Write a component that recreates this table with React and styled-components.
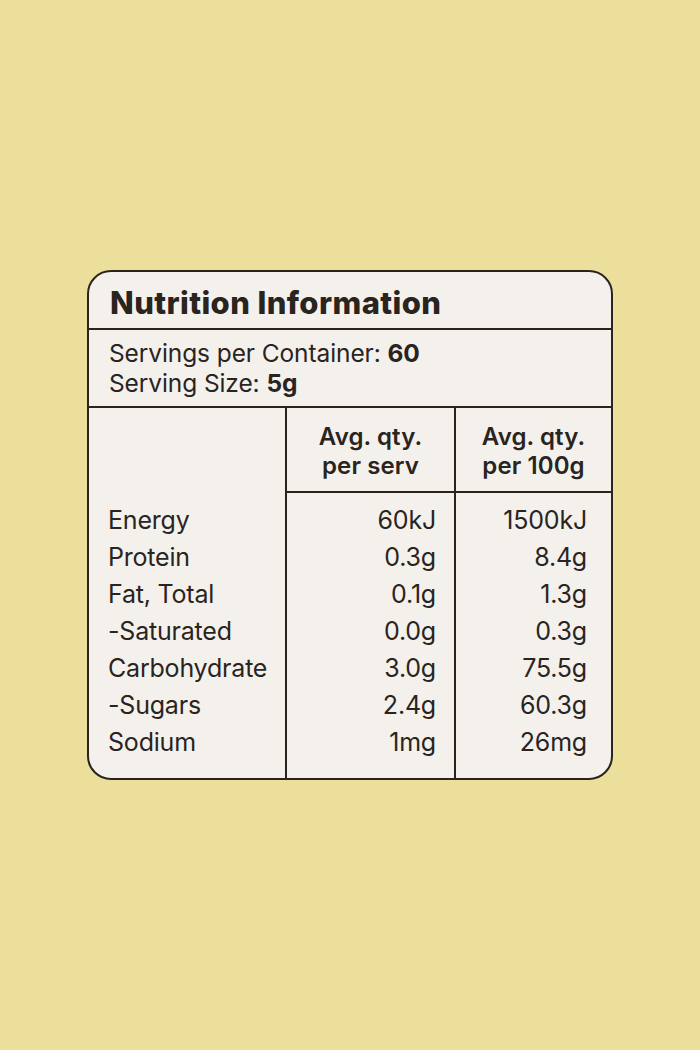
import React from 'react';
import styled, {createGlobalStyle} from 'styled-components';

const colors = {
  page: '#ecde9b',
  card: '#f4f1ed',
  ink: '#2a241f',
};

const GlobalStyle = createGlobalStyle`
  html, body {
    margin: 0;
    padding: 0;
    background: ${colors.page};
  }
  body {
    font-family: Inter, "Noto Sans", sans-serif;
    color: ${colors.ink};
  }
`;

const StyledPage = styled.div`
  width: 700px;
  height: 1050px;
  padding-top: 270px;
  box-sizing: border-box;
  display: flex;
  justify-content: center;
`;

const StyledCard = styled.div`
  width: 526px;
  height: 510px;
  box-sizing: border-box;
  border: 2.5px solid ${colors.ink};
  border-radius: 24px;
  background: ${colors.card};
  overflow: hidden;
  display: flex;
  flex-direction: column;
`;

const StyledTitle = styled.h1`
  margin: 0;
  height: 58px;
  padding: 13px 0 0 21px;
  box-sizing: border-box;
  border-bottom: 2.5px solid ${colors.ink};
  font-size: 31px;
  font-weight: 800;
  letter-spacing: 0.4px;
  line-height: 36px;
`;

const StyledServings = styled.div`
  height: 78px;
  padding: 8px 0 0 20px;
  box-sizing: border-box;
  border-bottom: 2.5px solid ${colors.ink};
  font-size: 24.5px;
  letter-spacing: -0.1px;
  line-height: 30px;

  b {
    font-weight: 700;
  }
`;

const StyledGrid = styled.div`
  flex: 1;
  display: grid;
  grid-template-columns: 196px 169px 1fr;
  grid-template-rows: 85px 1fr;
`;

const StyledCell = styled.div`
  box-sizing: border-box;
  border-left: ${p => (p.$first ? 'none' : `2.5px solid ${colors.ink}`)};
  border-bottom: ${p => (p.$head && !p.$first ? `2.5px solid ${colors.ink}` : 'none')};
`;

const StyledHead = styled(StyledCell)`
  display: flex;
  flex-direction: column;
  justify-content: center;
  align-items: center;
  padding-top: 2px;
  font-size: 24px;
  font-weight: 600;
  letter-spacing: 0.1px;
  line-height: 29px;
  text-align: center;
`;

const StyledColumn = styled(StyledCell)`
  display: flex;
  flex-direction: column;
  padding: 9px ${p => p.$padRight || 0}px 0 ${p => p.$padLeft || 0}px;
  align-items: ${p => (p.$right ? 'flex-end' : 'flex-start')};
  font-size: 25px;
  letter-spacing: -0.2px;
`;

const StyledLine = styled.div`
  height: 37px;
  line-height: 37px;
  white-space: nowrap;
`;

const rows = [
  ['Energy', '60kJ', '1500kJ'],
  ['Protein', '0.3g', '8.4g'],
  ['Fat, Total', '0.1g', '1.3g'],
  ['-Saturated', '0.0g', '0.3g'],
  ['Carbohydrate', '3.0g', '75.5g'],
  ['-Sugars', '2.4g', '60.3g'],
  ['Sodium', '1mg', '26mg'],
];

const App = () => (
  <StyledPage>
    <GlobalStyle />
    <StyledCard>
      <StyledTitle>Nutrition Information</StyledTitle>
      <StyledServings>
        <div>Servings per Container: <b>60</b></div>
        <div>Serving Size: <b>5g</b></div>
      </StyledServings>
      <StyledGrid>
        <StyledCell $first $head />
        <StyledHead $head>
          <span>Avg. qty.</span>
          <span>per serv</span>
        </StyledHead>
        <StyledHead $head>
          <span>Avg. qty.</span>
          <span>per 100g</span>
        </StyledHead>
        <StyledColumn $first $padLeft={19}>
          {rows.map(r => <StyledLine key={r[0]}>{r[0]}</StyledLine>)}
        </StyledColumn>
        <StyledColumn $right $padRight={18}>
          {rows.map(r => <StyledLine key={r[0]}>{r[1]}</StyledLine>)}
        </StyledColumn>
        <StyledColumn $right $padRight={24}>
          {rows.map(r => <StyledLine key={r[0]}>{r[2]}</StyledLine>)}
        </StyledColumn>
      </StyledGrid>
    </StyledCard>
  </StyledPage>
);

export default App;
